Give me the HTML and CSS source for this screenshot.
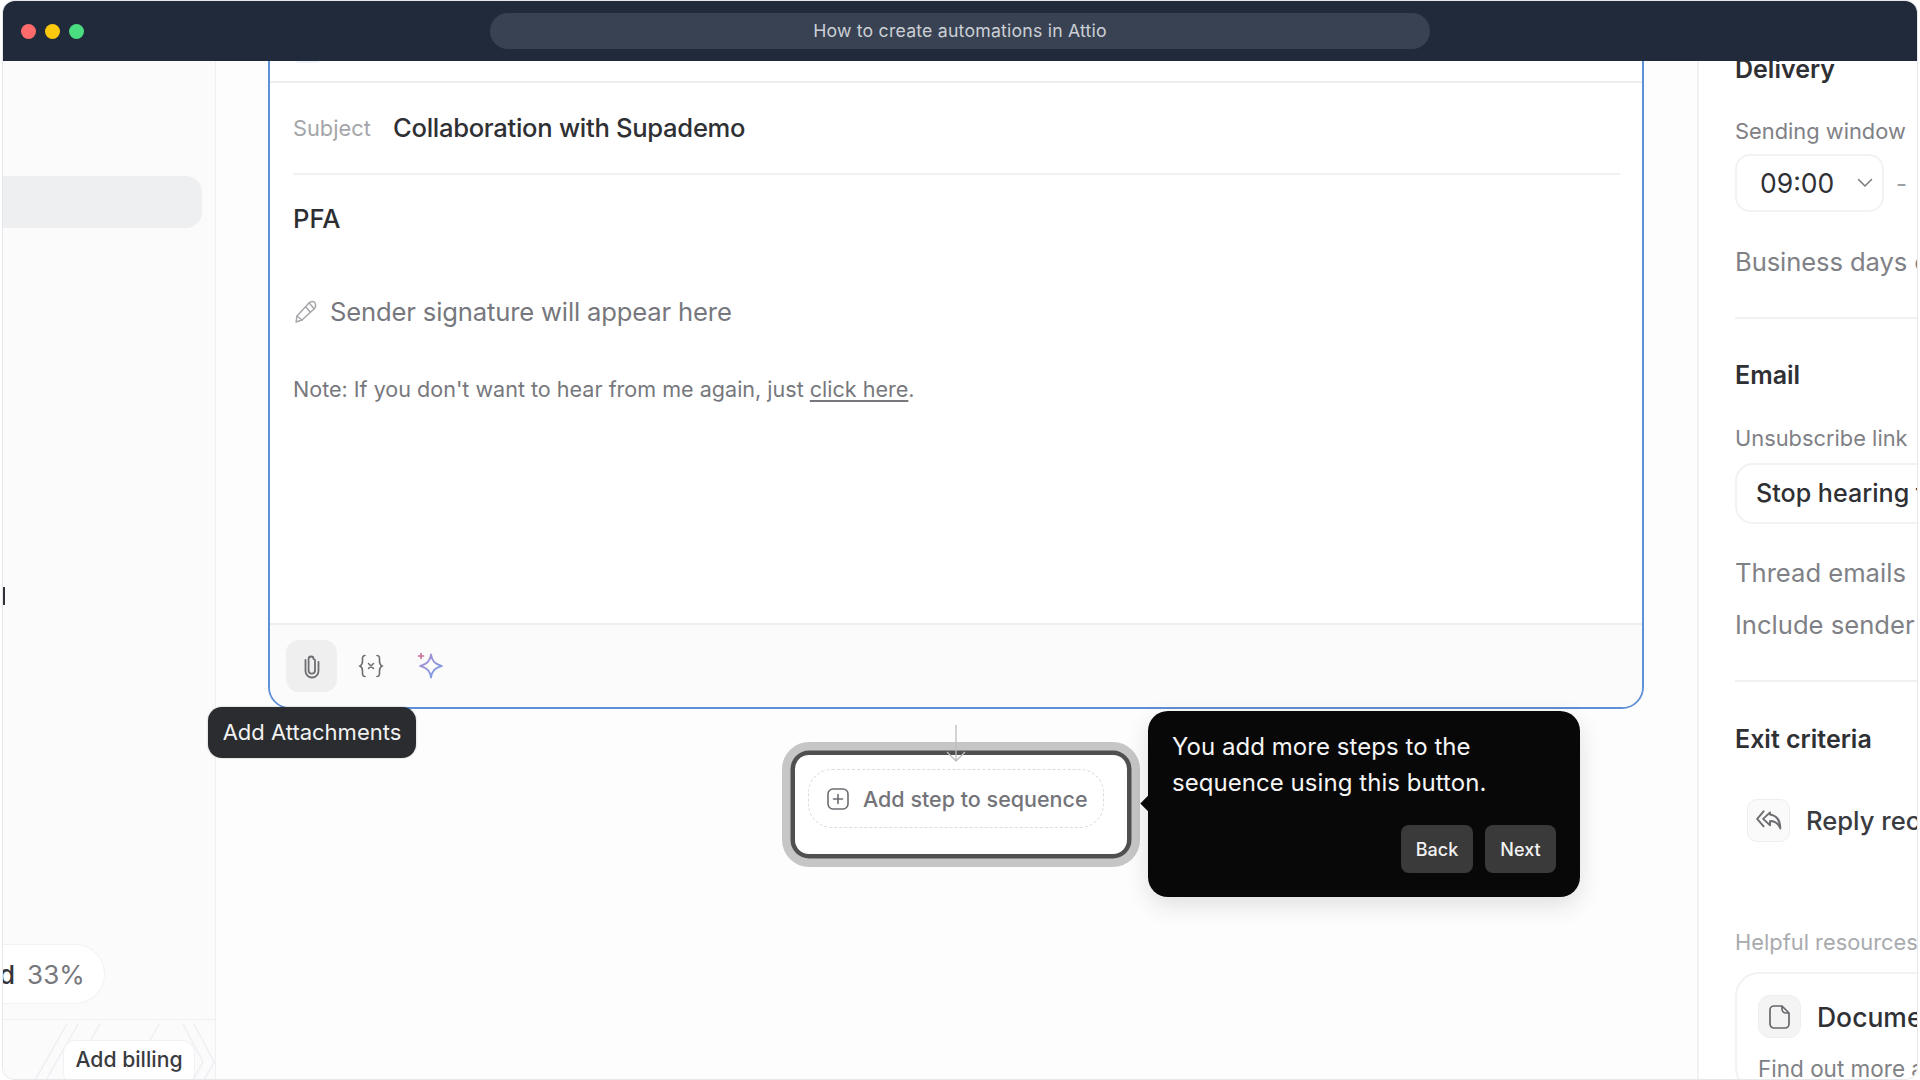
FILE: index.html
```html
<!DOCTYPE html>
<html lang="en">
<head>
<meta charset="utf-8">
<title>How to create automations in Attio</title>
<link rel="stylesheet" href="styles.css">
</head>
<body>
<div class="frame">
  <header class="titlebar">
    <div class="lights"><span class="light red"></span><span class="light yellow"></span><span class="light green"></span></div>
    <div class="address">How to create automations in Attio</div>
  </header>
  <div class="app">
    <aside class="sidebar">
      <div class="nav-active"></div>
      <span class="caret"></span>
      <div class="sidebar-spacer"></div>
      <div class="progress"><span class="progress-name">d</span><span class="progress-value">33%</span></div>
      <div class="billing">
        <svg class="billing-lines" width="213" height="60" viewBox="0 0 213 60" fill="none" stroke="#eeeef4" stroke-width="1.5"><path d="M64 4 32 60M75 4 43 60M97 4 80 34M156 4 146 22M180 4 200 42 190 60M191 4 211 42 201 60"/></svg>
        <div class="billing-btn">Add billing</div>
      </div>
    </aside>
    <main class="canvas">
      <section class="card">
        <div class="card-head"><span class="chip"></span></div>
        <div class="subject"><span class="subject-label">Subject</span><span class="subject-text">Collaboration with Supademo</span></div>
        <div class="card-body">
          <p class="pfa">PFA</p>
          <p class="signature">
            <svg width="26" height="26" viewBox="0 0 26 26" fill="none" stroke="#a3a4a8" stroke-width="1.4" stroke-linejoin="round" stroke-linecap="round"><path d="M3 24l1-6L16 5c2-2 5-2 6 0s1 4-1 6L9 22z"/><path d="M16 5c1 1 4 4 5 6M13 9l4 5M4 18l5 4"/></svg>
            <span>Sender signature will appear here</span>
          </p>
          <p class="note">Note: If you don't want to hear from me again, just <u>click here</u>.</p>
        </div>
        <div class="toolbar">
          <div class="tool tool-on">
            <svg width="20" height="26" viewBox="0 0 20 26" fill="none" stroke="#6d6e72" stroke-width="1.800" stroke-linecap="round"><path d="M13 7v10.500a3.200 3.200 0 0 1-6.400 0V6a2.500 2.500 0 0 1 5 0"/><path d="M16.500 9v9a6.500 6.500 0 0 1-13 0V7"/></svg>
            <div class="tooltip">Add Attachments</div>
          </div>
          <div class="tool">
            <svg width="26" height="24" viewBox="0 0 26 24" fill="none" stroke="#6d6e72" stroke-width="1.600" stroke-linecap="round"><path d="M7 1.500c-3 0-2.500 3-2.500 5.500S4 11 2 12c2 1 2.500 2.500 2.500 5S4 22.500 7 22.500M19 1.500c3 0 2.500 3 2.500 5.500s.5 4 2.500 5c-2 1-2.500 2.500-2.500 5s.5 5.500-2.500 5.500"/><path d="M10.500 9.500l5 5M15.500 9.500l-5 5" stroke-width="1.500"/></svg>
          </div>
          <div class="tool">
            <svg class="spark-icon" width="28" height="28" viewBox="0 0 28 28" fill="none">
              <defs><linearGradient id="spark" x1="0" y1="0" x2="1" y2="1"><stop offset="0" stop-color="#b48bd0"/><stop offset="1" stop-color="#6f9fe6"/></linearGradient></defs>
              <path d="M14 2.500c1 6.500 3.500 9.500 11 11.500-7.500 2-10 5-11 11.500-1-6.500-3.500-9.500-11-11.500 7.500-2 10-5 11-11.500z" stroke="url(#spark)" stroke-width="1.800" stroke-linejoin="round"/>
              <path d="M4 1.500v5M1.500 4h5" stroke="#c86f96" stroke-width="1.600" stroke-linecap="round"/>
            </svg>
          </div>
        </div>
      </section>
      <div class="step">
        <svg class="connector" width="24" height="37" viewBox="0 0 24 37" fill="none" stroke="#bdbdbd" stroke-width="1.300"><path d="M12 0v36M3 27l9 9 9-9"/></svg>
        <div class="step-inner">
          <svg width="22" height="22" viewBox="0 0 22 22" fill="none" stroke="#6b6d72" stroke-width="1.600" stroke-linecap="round"><rect x="1" y="1" width="20" height="20" rx="5"/><path d="M11 6.500v9M6.500 11h9"/></svg>
          <span>Add step to sequence</span>
        </div>
        <div class="popover">
          <p class="popover-text">You add more steps to the sequence using this button.</p>
          <div class="popover-actions"><span class="pop-btn">Back</span><span class="pop-btn pop-next">Next</span></div>
        </div>
      </div>
    </main>
    <aside class="panel">
      <h3 class="panel-title first">Delivery</h3>
      <div class="label label-window">Sending window</div>
      <div class="time-row">
        <div class="select">09:00
          <svg width="16" height="10" viewBox="0 0 16 10" fill="none" stroke="#77797e" stroke-width="1.500" stroke-linecap="round" stroke-linejoin="round"><path d="M1.500 1.500 8 8l6.500-6.500"/></svg>
        </div>
        <span class="dash">-</span>
      </div>
      <div class="row-text row-days">Business days only</div>
      <hr class="rule rule-a">
      <h3 class="panel-title title-email">Email</h3>
      <div class="label label-unsub">Unsubscribe link</div>
      <div class="input">Stop hearing from me</div>
      <div class="row-text row-thread">Thread emails</div>
      <div class="row-text row-include">Include sender signature</div>
      <hr class="rule rule-b">
      <h3 class="panel-title">Exit criteria</h3>
      <div class="exit">
        <span class="icon-box">
          <svg width="28" height="26" viewBox="0 0 26 24" fill="none" stroke="#6d6e72" stroke-width="1.800" stroke-linejoin="round" stroke-linecap="round"><path d="M8 3 2 10l6 7"/><path d="M14 4 7.500 10l6.500 6v-4c4.500 0 7.500 1.500 9.500 7 0-7.500-3-12-9.500-13z"/></svg>
        </span>
        <span class="exit-text">Reply received</span>
      </div>
      <div class="resources">Helpful resources</div>
      <div class="doc-card">
        <div class="doc-head">
          <span class="icon-box icon-box-doc">
            <svg width="22" height="26" viewBox="0 0 22 26" fill="none" stroke="#67686c" stroke-width="1.700" stroke-linejoin="round"><path d="M5 2h8l7 7v11a4 4 0 0 1-4 4H5a4 4 0 0 1-4-4V6a4 4 0 0 1 4-4z"/><path d="M13 2v3a4 4 0 0 0 4 4h3"/></svg>
          </span>
          <span class="doc-title">Documentation</span>
        </div>
        <div class="doc-sub">Find out more about sequences</div>
      </div>
    </aside>
  </div>
</div>
</body>
</html>
```

FILE: styles.css
```css
* { box-sizing: border-box; }
html, body { margin: 0; height: 100%; background: #fff; overflow: hidden; }
body { padding: 1px 3px 1px 3px; font-family: Inter, "Liberation Sans", sans-serif; }
p, h3 { margin: 0; }

.frame { height: 1078px; display: flex; flex-direction: column; border-radius: 12px; overflow: hidden; box-shadow: 0 0 0 1px #e6e7ea; }

.titlebar { height: 60px; flex: none; background: #212a3a; display: flex; align-items: center; position: relative; z-index: 5; }
.lights { display: flex; gap: 9px; padding-left: 18px; }
.light { width: 15px; height: 15px; border-radius: 50%; }
.red { background: #ff6b6b; }
.yellow { background: #fdc90f; }
.green { background: #4ade80; }
.address { width: 940px; height: 36px; margin-left: 406px; background: #394252; border-radius: 18px; color: #ccd0d6; font-size: 17.700px; letter-spacing: 0.2px; padding-bottom: 2px; display: flex; align-items: center; justify-content: center; }

.app { flex: 1; min-height: 0; display: flex; background: #fdfdfd; }

.sidebar { width: 213px; flex: none; background: #fbfbfb; border-right: 1.500px solid #f0f0f2; display: flex; flex-direction: column; position: relative; }
.nav-active { height: 52px; width: 199px; margin-top: 115px; background: #eeeff1; border-radius: 0 16px 16px 0; }
.caret { position: absolute; left: 0; top: 526px; width: 2px; height: 18px; background: #303236; }
.sidebar-spacer { flex: 1; }
.progress { width: 102px; height: 60px; background: #fff; border: 1.500px solid #f2f2f3; border-left: 0; border-radius: 0 30px 30px 0; display: flex; align-items: center; gap: 12px; font-size: 26px; overflow: hidden; margin-bottom: 15px; }
.progress-name { color: #35363a; font-weight: 500; margin-left: -4px; }
.progress-value { color: #77787d; }
.billing { height: 60px; flex: none; border-top: 1.500px solid #f0f0f2; position: relative; overflow: hidden; }
.billing-lines { position: absolute; left: 0; top: 0; }
.billing-btn { position: absolute; left: 61px; top: 21px; width: 130px; height: 44px; background: #fff; border-radius: 12px; box-shadow: 0 0 0 1px #f1f1f3; font-size: 21.200px; font-weight: 500; color: #3a3b3f; text-align: center; line-height: 36px; }

.canvas { flex: 1; min-width: 0; position: relative; }
.card { width: 1376px; height: 688px; margin: -40px 0 0 52px; background: #fff; border: 2px solid #5f8fd6; border-radius: 0 0 22px 22px; display: flex; flex-direction: column; }
.card-head { height: 60px; flex: none; border-bottom: 2px solid #eeeeef; padding: 0 0 0 22px; }
.chip { display: block; width: 31px; height: 30px; margin-top: 10px; background: #eef2fb; border-radius: 8px; }
.subject { height: 92px; flex: none; margin: 0 22px 0 23px; padding-bottom: 1px; border-bottom: 2px solid #f1f1f2; display: flex; align-items: center; }
.subject-label { width: 100px; font-size: 21.800px; color: #a4a5a9; }
.subject-text { font-size: 25.600px; font-weight: 500; color: #2f3034; letter-spacing: -0.3px; }
.card-body { flex: 1; padding: 29px 23px 0; }
.pfa { font-size: 25.600px; line-height: 30px; font-weight: 500; color: #2d2e32; }
.signature { margin-top: 62px; height: 30px; display: flex; align-items: center; gap: 11px; font-size: 25.600px; color: #77787d; letter-spacing: -0.15px; }
.note { margin-top: 48px; line-height: 30px; font-size: 21.550px; color: #77787d; }
.note u { text-underline-offset: 3px; }
.toolbar { height: 84px; flex: none; background: #fbfbfb; border-top: 2px solid #eeeeef; border-radius: 0 0 20px 20px; padding: 15px 16px; display: flex; gap: 8px; align-items: flex-start; }
.tool { width: 51px; height: 52px; border-radius: 13px; display: flex; align-items: center; justify-content: center; position: relative; }
.tool-on { background: #efefef; }
.spark-icon { margin-left: 2px; }
.tooltip { position: absolute; left: -78px; top: 67px; width: 208px; height: 51px; background: #2a2c30; border-radius: 14px; color: #f1f1f1; font-size: 22px; padding-bottom: 2px; display: flex; align-items: center; justify-content: center; white-space: nowrap; box-shadow: 0 0 2px rgba(0,0,0,.3); z-index: 2; }

.step { width: 332px; height: 99px; margin: 46px 0 0 579px; background: #fff; border-radius: 14px; box-shadow: 0 0 0 4.500px #505050, 0 0 0 13px #c6c6c6; position: relative; padding: 14px 13px; }
.connector { position: absolute; left: 149px; top: -30px; }
.step-inner { width: 296px; height: 59px; border: 1.500px dashed #dcdcdd; border-radius: 24px; display: flex; align-items: center; gap: 14px; padding-left: 18px; font-size: 21.500px; font-weight: 500; color: #737479; white-space: nowrap; }
.popover { position: absolute; left: 353px; top: -44px; width: 432px; height: 186px; background: #080808; border-radius: 20px; padding: 18px 24px; box-shadow: 0 8px 24px rgba(0,0,0,.12); z-index: 3; }
.popover::before { content: ""; position: absolute; left: -5px; top: 86px; width: 13px; height: 13px; background: #080808; transform: rotate(45deg); }
.popover-text { font-size: 24px; line-height: 36px; color: #f5f5f5; letter-spacing: 0.05px; width: 340px; }
.popover-actions { position: absolute; right: 24px; bottom: 24px; display: flex; gap: 12px; }
.pop-btn { width: 72px; height: 48px; background: #3a3a3a; border-radius: 8px; color: #f2f2f2; font-size: 18px; font-weight: 500; display: flex; align-items: center; justify-content: center; }
.pop-next { width: 71px; }

.panel { width: 220px; flex: none; background: #fff; border-left: 2px solid #f1f1f3; padding-left: 36px; overflow: hidden; white-space: nowrap; }
.panel-title { font-size: 25px; line-height: 30px; font-weight: 600; color: #2f3034; margin-top: 42px; }
.panel-title.first { margin-top: -7px; }
.title-email { margin-top: 41px; }
.label { font-size: 21.850px; line-height: 26px; color: #808186; }
.label-window { margin-top: 34px; }
.time-row { display: flex; align-items: center; margin-top: 10px; }
.select { width: 149px; height: 58px; flex: none; border: 2px solid #f2f2f3; border-radius: 15px; display: flex; align-items: center; justify-content: space-between; padding: 0 9px 0 23px; font-size: 26.500px; color: #2f3034; }
.dash { margin-left: 12px; font-size: 24px; color: #a0a1a5; }
.row-text { font-size: 25.600px; line-height: 30px; color: #808186; }
.row-days { margin-top: 35px; letter-spacing: -0.1px; }
.rule { border: 0; height: 2px; background: #f1f1f2; margin: 0; }
.rule-a { margin-top: 40px; }
.label-unsub { margin-top: 35px; }
.input { width: 240px; height: 61px; margin-top: 12px; border: 2px solid #f2f2f3; border-radius: 18px; padding: 0 0 2px 19px; display: flex; align-items: center; font-size: 25.100px; font-weight: 500; color: #2f3034; }
.row-thread { margin-top: 34px; }
.row-include { margin-top: 22px; }
.rule-b { margin-top: 40px; }
.exit { display: flex; align-items: center; gap: 16px; margin: 45px 0 0 12px; }
.icon-box { width: 43px; height: 43px; flex: none; background: #fafafa; border: 1.500px solid #eeeeef; border-radius: 10px; display: flex; align-items: center; justify-content: center; }
.exit-text { font-size: 25.600px; font-weight: 500; color: #3a3b3f; }
.resources { margin-top: 87px; font-size: 21.850px; line-height: 26px; color: #a9aaae; }
.doc-card { width: 260px; height: 120px; margin-top: 17px; border: 2px solid #f2f2f3; border-radius: 24px; padding: 21px 0 0 21px; }
.doc-head { display: flex; align-items: center; gap: 16px; }
.icon-box-doc { background: #f4f4f5; border-radius: 12px; }
.doc-title { font-size: 26.500px; font-weight: 500; color: #303135; }
.doc-sub { margin-top: 17px; font-size: 22.500px; line-height: 28px; color: #808186; }
```
